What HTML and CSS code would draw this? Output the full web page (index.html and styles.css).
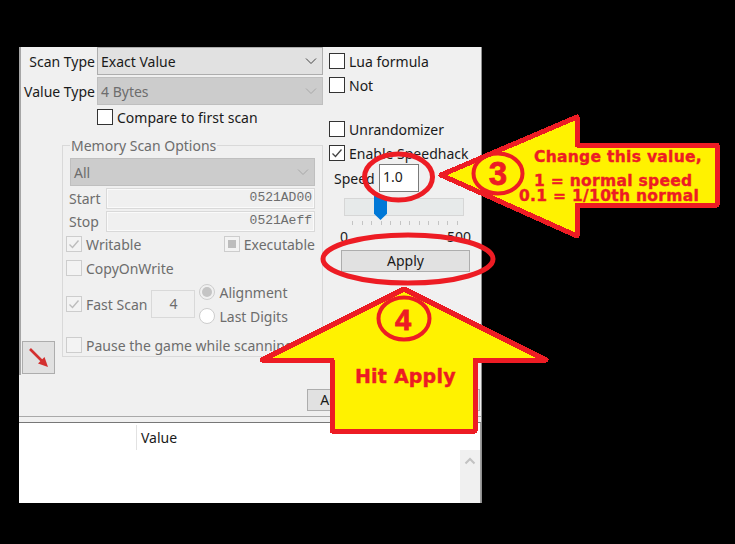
FILE: index.html
```html
<!DOCTYPE html>
<html lang="en">
<head>
<meta charset="utf-8">
<title>Speedhack</title>
<link rel="stylesheet" href="styles.css">
</head>
<body>
<div class="stage">
  <div class="window">
    <div class="panel">
      <div class="form">
        <div class="left">
          <div class="field">
            <span class="field-label">Scan Type</span>
            <div class="select"><span>Exact Value</span><svg class="chev" width="12" height="8" viewBox="0 0 12 8"><path d="M1 1.5l5 5 5-5" fill="none" stroke="#444" stroke-width="1"/></svg></div>
          </div>
          <div class="field">
            <span class="field-label">Value Type</span>
            <div class="select off"><span>4 Bytes</span><svg class="chev" width="12" height="8" viewBox="0 0 12 8"><path d="M1 1.5l5 5 5-5" fill="none" stroke="#a8a8a8" stroke-width="1"/></svg></div>
          </div>
          <label class="check compare"><span class="box"></span>Compare to first scan</label>
          <div class="lower">
            <div class="arrow-btn">
              <svg width="24" height="24" viewBox="0 0 24 24"><path d="M3 3L17 17" stroke="#d3302f" stroke-width="2.6" fill="none"/><path d="M21 21l-10-3.5 6.5-6.5z" fill="#d3302f"/></svg>
            </div>
            <div class="group">
              <div class="legend">Memory Scan Options</div>
              <div class="select off group-select"><span>All</span><svg class="chev" width="12" height="8" viewBox="0 0 12 8"><path d="M1 1.5l5 5 5-5" fill="none" stroke="#a8a8a8" stroke-width="1"/></svg></div>
              <div class="addr first"><span class="addr-label">Start</span><div class="addr-input">0521AD00</div></div>
              <div class="addr"><span class="addr-label">Stop</span><div class="addr-input">0521Aeff</div></div>
              <div class="row-between">
                <label class="check dis"><span class="box"><svg width="14" height="14" viewBox="0 0 14 14"><path d="M2.5 7.5l3 3 6-7" fill="none" stroke="#bdbdbd" stroke-width="1.4"/></svg></span>Writable</label>
                <label class="check dis"><span class="box"><span class="square"></span></span>Executable</label>
              </div>
              <label class="check dis cow"><span class="box"></span>CopyOnWrite</label>
              <div class="fast">
                <label class="check dis"><span class="box"><svg width="14" height="14" viewBox="0 0 14 14"><path d="M2.5 7.5l3 3 6-7" fill="none" stroke="#bdbdbd" stroke-width="1.4"/></svg></span>Fast Scan</label>
                <div class="fast-input">4</div>
                <div class="radios">
                  <label class="radio"><span class="dot on"></span>Alignment</label>
                  <label class="radio"><span class="dot"></span>Last Digits</label>
                </div>
              </div>
              <label class="check dis pause"><span class="box"></span>Pause the game while scanning</label>
            </div>
          </div>
        </div>
        <div class="right">
          <label class="check"><span class="box"></span>Lua formula</label>
          <label class="check"><span class="box"></span>Not</label>
          <label class="check unrand"><span class="box"></span>Unrandomizer</label>
          <label class="check"><span class="box"><svg width="14" height="14" viewBox="0 0 14 14"><path d="M2.5 7.5l3 3 6-7" fill="none" stroke="#444" stroke-width="1.3"/></svg></span>Enable Speedhack</label>
          <div class="speed"><span class="speed-label">Speed</span><div class="speed-input">1.0</div></div>
          <div class="track"><span class="thumb"></span></div>
          <div class="ticks"><i></i><i></i><i></i><i></i><i></i><i></i><i></i><i></i><i></i><i></i><i></i><i></i></div>
          <div class="range"><span>0</span><span>500</span></div>
          <div class="apply">Apply</div>
        </div>
      </div>
      <div class="footer"><div class="add">Add Address Manually</div></div>
    </div>
    <div class="gap"></div>
    <div class="list">
      <div class="list-head"><div class="col-a"></div><div class="col-b">Value</div></div>
      <div class="list-body">
        <div class="scroll"><svg width="12" height="8" viewBox="0 0 12 8"><path d="M1.5 6.500L6 2l4.500 4.500" fill="none" stroke="#c2c2c2" stroke-width="2"/></svg></div>
      </div>
    </div>
  </div>
  <svg class="notes" width="735" height="544" viewBox="0 0 735 544">
    <ellipse class="ring" cx="398.500" cy="177" rx="34" ry="23"/>
    <ellipse class="ring" cx="408" cy="259" rx="85" ry="24"/>
    <polygon class="big" points="441,175 577,117 577,145 717,145 717,205 577,205 577,236"/>
    <polygon class="big" points="404,289 546,360 475,360 475,431 332,431 332,360 262,360"/>
    <ellipse class="ring thin" cx="498" cy="173.500" rx="24.500" ry="20"/>
    <ellipse class="ring thin" cx="404" cy="318.500" rx="25.500" ry="21"/>
    <text class="num" x="498" y="185">3</text>
    <text class="num four" x="403" y="330">4</text>
    <text class="note" x="534" y="162">Change this value,</text>
    <text class="note" x="534" y="186">1 = normal speed</text>
    <text class="note" x="519" y="201">0.1 = 1/10th normal</text>
    <text class="note hit" x="355" y="383">Hit Apply</text>
  </svg>
</div>
</body>
</html>
```

FILE: styles.css
```css
* { box-sizing: border-box; }
html, body { margin: 0; padding: 0; background: #000; }
body { font-family: "Noto Sans", "Liberation Sans", sans-serif; font-size: 14px; color: #1a1a1a; }
.stage { position: relative; width: 735px; height: 544px; padding: 47px 253px 41px 19px; overflow: hidden; }
.window { height: 456px; display: flex; flex-direction: column; background: #f0f0f0; border-right: 1px solid #8f8f8f; }
.panel { height: 370px; display: flex; flex-direction: column; border-bottom: 1px solid #a9a9a9; }
.form { height: 328px; display: flex; border-left: 2px solid #a6a6a6; }
.left { width: 305px; flex: none; padding-right: 3px; }
.field { display: flex; height: 28px; margin-bottom: 2px; align-items: center; }
.field-label { width: 76px; padding-right: 2px; text-align: right; white-space: nowrap; }
.select { flex: 1; height: 28px; display: flex; align-items: center; justify-content: space-between; padding: 0 5px 0 3px; background: #e1e1e1; border: 1px solid #adadad; }
.select.off { background: #ccc; border-color: #bfbfbf; color: #6d6d6d; }
.group-select { flex: none; width: 245px; margin: 0 0 0 7px; }
.check { display: flex; align-items: center; height: 16px; white-space: nowrap; }
.box { width: 16px; height: 16px; flex: none; margin-right: 4px; background: #fff; border: 1px solid #333; display: flex; align-items: center; justify-content: center; }
.compare { margin: 4px 0 0 76px; }
.lower { display: flex; align-items: flex-end; margin-top: 20px; }
.arrow-btn { width: 33px; height: 33px; margin: 0 7px 0 1px; flex: none; background: #e1e1e1; border: 1px solid #adadad; display: flex; align-items: center; justify-content: center; }
.group { width: 261px; height: 212px; margin-bottom: 17px; border: 1px solid #d9d9d9; color: #6d6d6d; }
.legend { width: fit-content; height: 20px; line-height: 20px; margin: -10px 0 0 7px; padding: 0 1px; background: #f0f0f0; }
.group-select { margin-top: 2px; }
.addr { display: flex; align-items: center; height: 21px; margin: 2px 7px 0 6px; justify-content: space-between; }
.addr.first { margin-top: 2px; }
.addr-input { width: 209px; height: 21px; padding-right: 2px; text-align: right; line-height: 18px; background: #f0f0f0; border: 1px solid #d9d9d9; box-shadow: inset 0 0 0 1px #fafafa; font-family: "Liberation Mono", monospace; font-size: 13px; color: #6d6d6d; }
.dis .box { background: #f3f3f3; border-color: #cdcdcd; }
.square { width: 8px; height: 8px; background: #bdbdbd; }
.row-between { display: flex; justify-content: space-between; margin: 4px 7px 0 3px; }
.cow { margin: 8px 0 0 3px; }
.fast { display: flex; align-items: center; height: 48px; margin: 4px 0 0 3px; }
.fast-input { width: 44px; height: 28px; margin-left: 4px; text-align: center; line-height: 26px; border: 1px solid #d9d9d9; }
.radios { margin-left: 4px; display: flex; flex-direction: column; }
.radio { display: flex; align-items: center; height: 24px; white-space: nowrap; }
.dot { width: 16px; height: 16px; margin-right: 4px; border-radius: 50%; background: #fff; border: 1px solid #cdcdcd; display: flex; align-items: center; justify-content: center; }
.dot.on { background: #f0f0f0; }
.dot.on::after { content: ""; width: 10px; height: 10px; border-radius: 50%; background: #c4c4c4; }
.pause { margin: 9px 0 0 3px; }
.right { flex: 1; padding: 6px 0 0 3px; display: flex; flex-direction: column; }
.right .check { margin-bottom: 8px; }
.right .unrand { margin-top: 20px; }
.speed { display: flex; align-items: center; height: 28px; margin: -5px 0 0 5px; }
.speed-label { width: 45px; }
.speed-input { width: 40px; height: 28px; padding-left: 3px; line-height: 24px; background: #fff; border: 1px solid #7a7a7a; }
.track { position: relative; width: 120px; height: 18px; margin: 6px 0 0 15px; background: #e7eaea; border: 1px solid #d6d6d6; }
.thumb { position: absolute; left: 29px; top: -3px; width: 13px; height: 24px; background: #0078d7; clip-path: polygon(0 0, 100% 0, 100% 74%, 50% 100%, 0 74%); }
.ticks { display: flex; justify-content: space-between; width: 106px; height: 4px; margin: 5px 0 0 23px; }
.ticks i { width: 1px; height: 4px; background: #c4c4c4; }
.range { display: flex; justify-content: space-between; width: 131px; height: 19px; margin: 2px 0 0 11px; line-height: 19px; }
.apply { width: 129px; height: 22px; margin-left: 12px; margin-top: 4px; text-align: center; line-height: 20px; background: #e1e1e1; border: 1px solid #adadad; }
.footer { flex: 1; display: flex; justify-content: flex-end; padding: 14px 1px 0 0; }
.add { width: 173px; height: 22px; text-align: center; line-height: 20px; background: #e1e1e1; border: 1px solid #adadad; white-space: nowrap; overflow: hidden; }
.gap { height: 5px; flex: none; }
.list { flex: 1; background: #fff; border-top: 1px solid #777; border-right: 1px solid #a0a0a0; display: flex; flex-direction: column; }
.list-head { display: flex; height: 25px; flex: none; margin-top: 2px; }
.col-a { width: 118px; border-right: 1px solid #e2e2e2; }
.col-b { padding-left: 4px; line-height: 25px; }
.list-body { flex: 1; display: flex; justify-content: flex-end; }
.scroll { width: 20px; background: #f0f0f0; display: flex; justify-content: center; padding-top: 7px; }
.notes { position: absolute; left: 0; top: 0; }
.ring { fill: none; stroke: #ed1c24; stroke-width: 5; }
.ring.thin { stroke-width: 4; }
.big { fill: #fff200; stroke: #ed1c24; stroke-width: 5; stroke-linejoin: round; shape-rendering: crispEdges; }
.note { font-family: "DejaVu Sans", sans-serif; font-weight: 700; font-size: 15.5px; letter-spacing: 0.3px; stroke: #ed1c24; stroke-width: 0.4px; fill: #ed1c24; }
.note.hit { font-size: 19px; letter-spacing: 0.2px; }
.num { font-family: "Liberation Sans", sans-serif; font-weight: 700; font-size: 33px; stroke: #ed1c24; stroke-width: 0.8px; fill: #ed1c24; text-anchor: middle; }
.num.four { font-size: 29px; }
```
